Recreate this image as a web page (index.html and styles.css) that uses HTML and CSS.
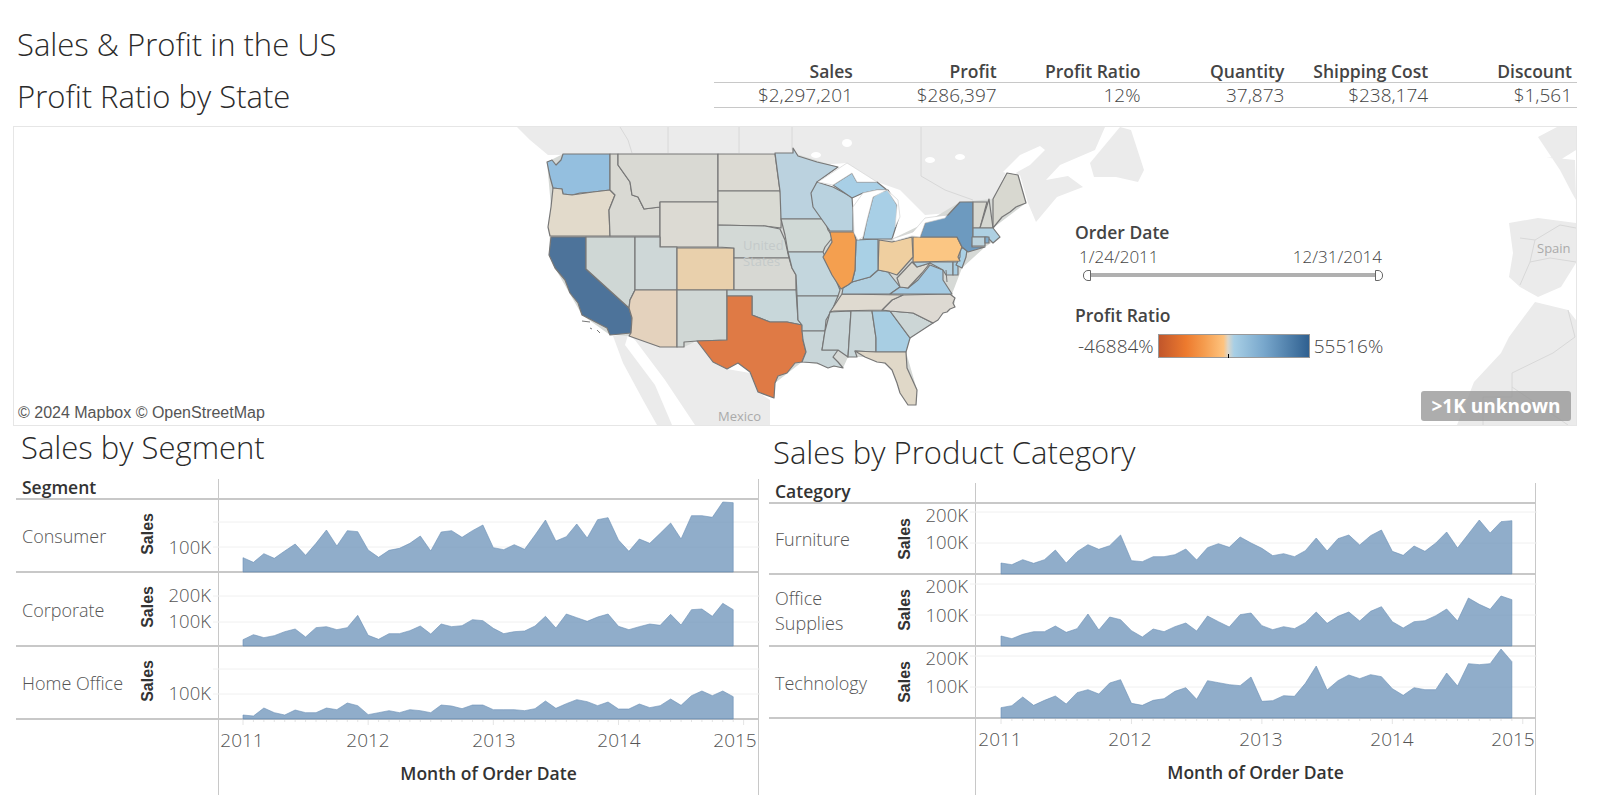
FILE: index.html
```html
<!DOCTYPE html>
<html lang="en">
<head>
    <meta charset="UTF-8">
    <title>Sales &amp; Profit in the US</title>
    <link rel="stylesheet" href="styles.css">
</head>
<body>
    <header class="top">
        <div class="titles">
            <h1>Sales &amp; Profit in the US</h1>
            <h2>Profit Ratio by State</h2>
        </div>
        <div class="kpi">
            <div class="kpi-head">Sales</div>
            <div class="kpi-head">Profit</div>
            <div class="kpi-head">Profit Ratio</div>
            <div class="kpi-head">Quantity</div>
            <div class="kpi-head">Shipping Cost</div>
            <div class="kpi-head">Discount</div>
            <div class="kpi-val">$2,297,201</div>
            <div class="kpi-val">$286,397</div>
            <div class="kpi-val">12%</div>
            <div class="kpi-val">37,873</div>
            <div class="kpi-val">$238,174</div>
            <div class="kpi-val">$1,561</div>
        </div>
    </header>

    <section class="map">
        <svg class="map-svg" viewBox="14 127 1562 298" width="1562" height="298">
            <g class="land">
                <polygon points="517,127 530,140 548,155 793,153 817,165 847,163 877,182 900,190 925,215 948,213 993,199 1007,170 1020,175 1028,203 1036,222 1057,197 1083,187 1068,176 1046,180 1060,165 1095,150 1105,127"/>
                <polygon points="1090,163 1120,127 1131,130 1144,170 1138,182 1116,177 1094,177"/>
                <polygon points="613,336 628,335 625,345 655,385 672,425 657,425 643,400 623,363"/>
                <polygon points="628,335 677,347 697,342 727,369 750,373 758,392 770,400 770,425 695,425 665,380 635,340"/>
                <polygon points="1538,137 1557,127 1576,127 1576,150 1560,160 1546,157 1575,160 1576,200 1572,193 1560,170"/>
                <polygon points="1509,223 1538,218 1576,223 1576,263 1561,287 1538,297 1520,287 1509,277 1513,253"/>
                <polygon points="1535,302 1568,310 1576,320 1576,425 1457,425 1474,382 1501,353 1509,337"/>
            </g>
            <g class="land-cut">
                <polygon points="1003,172 1020,155 1040,146 1045,150 1030,165 1012,175"/>
                <ellipse cx="847" cy="143" rx="5" ry="4"/>
                <ellipse cx="930" cy="160" rx="5" ry="3"/>
                <ellipse cx="960" cy="157" rx="5" ry="3"/>
                <ellipse cx="816" cy="155" rx="5" ry="3"/>
            </g>
            <g class="borders">
                <polyline points="668,127 668,153"/>
                <polyline points="739,127 739,153"/>
                <polyline points="792,127 792,150"/>
                <polyline points="620,127 628,140 632,153"/>
                <polyline points="921,127 921,176 945,190 973,200"/>
                <polyline points="1568,310 1575,337 1553,353 1512,373 1512,397 1483,397 1483,425"/>
                <polyline points="1512,387 1568,425"/>
                <polyline points="1520,238 1535,240 1530,262 1520,285"/>
                <polyline points="1535,240 1560,225 1576,228"/>
                <polyline points="1530,262 1550,258 1576,262"/>
            </g>
            <polygon class="us-base" points="547,162 563,154 775,154 793,153 838,167 817,182 853,207 858,240 892,239 925,223 960,202 993,199 1007,173 1018,175 1026,203 993,228 1000,237 985,247 962,268 952,294 955,303 933,323 910,338 906,352 917,390 916,405 908,405 893,367 865,357 848,357 843,368 802,362 775,383 774,398 758,392 750,372 738,363 727,369 697,341 684,347 660,347 629,336 610,335 582,315 555,268 549,255 551,207"/>
            <g class="states">
                <polygon fill="#94bfdf" points="547,162 552,160 556,165 561,160 563,154 610,154 610,190 593,192 580,193 572,195 563,194 562,189 553,188 550,177"/>
                <polygon fill="#e2dacb" points="553,188 562,189 563,194 572,195 593,192 610,190 615,195 609,210 610,236 550,236 548,227 551,207"/>
                <polygon fill="#4d739a" points="551,237 586,237 586,269 629,308 632,318 631,333 610,335 607,328 582,315 578,303 570,293 565,280 555,268 549,255"/>
                <polygon fill="#cfd7d5" points="586,237 635,237 635,290 630,300 629,308 586,269"/>
                <polygon fill="#d9d9d3" points="610,154 618,154 618,165 630,182 632,195 638,197 644,209 660,207 660,236 610,236 609,210 615,195 610,190"/>
                <polygon fill="#d9d9d3" points="618,154 718,154 718,202 660,202 660,207 644,209 638,197 632,195 630,182 618,165"/>
                <polygon fill="#dcdad3" points="660,202 718,202 718,247 660,247"/>
                <polygon fill="#ced7d7" points="635,237 660,237 660,247 677,247 677,290 635,290"/>
                <polygon fill="#e9d0ac" points="677,248 734,248 734,290 677,290"/>
                <polygon fill="#e4d2bd" points="635,290 677,290 677,347 660,347 629,336 631,333 632,318 629,308 630,300"/>
                <polygon fill="#d0d7d5" points="677,290 727,290 727,340 697,341 684,342 684,347 677,347"/>
                <polygon fill="#dcdad3" points="718,154 775,154 780,191 718,191"/>
                <polygon fill="#d9dad3" points="718,191 780,191 782,198 781,228 765,226 718,225"/>
                <polygon fill="#d3d9d6" points="718,225 765,226 780,229 785,240 789,258 734,258 734,248 718,247"/>
                <polygon fill="#d7d8d3" points="734,258 789,258 792,268 796,275 796,290 734,290"/>
                <polygon fill="#c8d7da" points="727,290 796,290 798,320 802,325 787,322 770,322 752,315 752,296 727,296"/>
                <polygon fill="#df7a45" points="727,296 752,296 752,315 770,322 787,322 802,325 803,340 806,352 802,362 795,363 787,373 778,376 775,383 774,398 758,392 750,372 738,363 727,369 713,362 697,341 727,340"/>
                <polygon fill="#bbd2df" points="775,153 793,153 793,148 798,156 817,162 838,167 817,182 812,195 815,208 825,219 781,219 780,191"/>
                <polygon fill="#d0d9d6" points="781,219 825,219 828,230 833,237 825,247 823,252 788,252 785,235"/>
                <polygon fill="#c3d6dd" points="788,252 823,252 833,273 840,290 838,296 797,296 796,275 792,268"/>
                <polygon fill="#c4d5da" points="797,296 838,296 833,308 826,320 825,331 802,331 802,325 798,320"/>
                <polygon fill="#c9d6d9" points="802,331 825,331 822,350 838,350 833,357 838,362 843,368 834,366 828,368 817,363 802,362 806,352 803,340"/>
                <polygon fill="#c9d6d9" points="851,311 830,312 825,331 822,350 838,350 848,357"/>
                <polygon fill="#c9d6d9" points="851,311 872,311 876,338 876,352 855,351 857,357 848,357"/>
                <polygon fill="#a8cee3" points="872,311 890,311 910,338 906,352 876,352 876,338"/>
                <polygon fill="#e0d8c8" points="855,351 876,352 906,352 907,368 917,390 916,405 908,405 900,393 897,383 892,370 885,363 877,362 865,357"/>
                <polygon fill="#ccd6d6" points="882,310 890,311 913,313 933,323 910,338 890,311"/>
                <polygon fill="#ddd9d2" points="903,295 950,294 955,298 953,303 955,307 950,309 947,312 943,313 938,320 933,323 913,313 890,311 882,310 892,300"/>
                <polygon fill="#dfdad0" points="842,294 903,295 892,300 882,310 834,311 830,312"/>
                <polygon fill="#b0cfe0" points="842,294 843,288 852,282 870,277 878,270 888,272 900,287 890,294"/>
                <polygon fill="#a5cbe3" points="890,294 900,287 908,288 918,280 930,265 943,270 943,280 952,294"/>
                <polygon fill="#dcd9d0" points="900,287 897,278 912,262 917,267 930,263 922,273 908,288"/>
                <polygon fill="#b5d1e0" points="913,262 953,262 953,275 946,275 943,270 930,263 917,267"/>
                <polygon fill="#a8cde2" points="953,262 958,262 958,275 953,275"/>
                <polygon fill="#aad0e5" points="960,247 967,250 966,257 962,268 956,265 960,257"/>
                <polygon fill="#fbc683" points="913,237 957,237 962,247 958,257 960,261 913,262"/>
                <polygon fill="#efcfa0" points="879,240 892,242 912,237 913,257 897,275 888,272 878,270"/>
                <polygon fill="#a9d0e5" points="856,240 878,239 878,270 870,277 852,282 855,270"/>
                <polygon fill="#f49f4f" points="830,232 854,232 856,240 855,270 852,282 848,285 841,289 832,275 823,257 832,242"/>
                <polygon fill="#b9d2df" points="817,182 833,187 852,197 853,212 853,231 830,231 813,207 811,193"/>
                <polygon fill="#a8cfe6" points="833,185 852,173 857,182 877,182 887,190 877,190 863,193 852,198"/>
                <polygon fill="#a8cfe6" points="873,197 880,192 888,190 897,205 898,220 892,239 863,239 867,220"/>
                <polygon fill="#6d9abf" points="920,237 925,223 948,215 960,202 973,202 973,238 972,247 985,247 968,252 962,247 957,237"/>
                <polygon fill="#d8d8d0" points="973,202 987,202 980,228 973,228"/>
                <polygon fill="#d5d7d1" points="989,199 993,228 980,228"/>
                <polygon fill="#d8d8d0" points="993,199 1007,173 1018,175 1026,203 1016,207 1010,212 1002,217 993,228"/>
                <polygon fill="#aed0e2" points="973,228 993,228 1000,237 993,243 987,237 973,237"/>
                <polygon fill="#bcd3dd" points="972,237 985,237 985,246 972,246"/>
                <polygon fill="#7fa9c9" points="985,237 989,237 989,243 985,243"/>
            </g>
            <g class="lakes">
                <polygon points="818,182 847,163 877,182 857,182 852,173 833,185"/>
                <polygon points="853,207 854,233 858,240 863,237 867,220 873,197 887,190 877,190 863,193"/>
                <polygon points="887,190 898,200 900,217 895,227 897,205"/>
                <polygon points="892,239 913,232 925,218 947,215 945,218 925,223 920,237 912,236 895,241"/>
            </g>
            <g class="isles">
                <polyline points="582,321 590,322"/>
                <polyline points="590,328 592,329"/>
                <polyline points="597,330 600,333"/>
                <polyline points="946,270 947,282"/>
            </g>
            <text class="map-label" x="743" y="250">United</text>
            <text class="map-label" x="743" y="266">States</text>
            <text class="map-label map-label-dark" x="718" y="421">Mexico</text>
            <text class="map-label map-label-dark" x="1537" y="253">Spain</text>
        </svg>
        <p class="attribution">© 2024 Mapbox © OpenStreetMap</p>
        <div class="unknown">&gt;1K unknown</div>
        <div class="legend">
            <div class="legend-title">Order Date</div>
            <div class="dates"><span>1/24/2011</span><span>12/31/2014</span></div>
            <div class="slider"><span class="handle handle-l"></span><span class="track"></span><span class="handle handle-r"></span></div>
            <div class="legend-title legend-title-2">Profit Ratio</div>
            <div class="ramp-row">
                <span>-46884%</span>
                <div class="ramp"><span class="ramp-tick"></span></div>
                <span>55516%</span>
            </div>
        </div>
    </section>

    <main class="bottom">
        <section class="panel panel-seg">
            <h3>Sales by Segment</h3>
            <div class="chart">
                <div class="col-head">Segment</div>
                <div class="plot-head"></div>

                <div class="row-head"><span class="row-label">Consumer</span><span class="sales">Sales</span></div>
                <div class="plot">
                    <svg viewBox="218 500 541 72" width="541" height="72">
                        <line class="grid" x1="212" x2="759" y1="522" y2="522"/>
                        <line class="grid" x1="212" x2="759" y1="547" y2="547"/>
                        <text class="tick" x="210" y="554">100K</text>
                        <polygon class="area" id="seg0"/>
                    </svg>
                </div>

                <div class="row-head"><span class="row-label">Corporate</span><span class="sales">Sales</span></div>
                <div class="plot">
                    <svg viewBox="218 573 541 73" width="541" height="73">
                        <line class="grid" x1="212" x2="759" y1="596" y2="596"/>
                        <line class="grid" x1="212" x2="759" y1="622" y2="622"/>
                        <text class="tick" x="210" y="602">200K</text>
                        <text class="tick" x="210" y="628">100K</text>
                        <polygon class="area" id="seg1"/>
                    </svg>
                </div>

                <div class="row-head"><span class="row-label">Home Office</span><span class="sales">Sales</span></div>
                <div class="plot">
                    <svg viewBox="218 647 541 72" width="541" height="72">
                        <line class="grid" x1="212" x2="759" y1="669" y2="669"/>
                        <line class="grid" x1="212" x2="759" y1="694" y2="694"/>
                        <text class="tick" x="210" y="700">100K</text>
                        <polygon class="area" id="seg2"/>
                    </svg>
                </div>

                <div class="axis-blank"></div>
                <div class="axis">
                    <svg viewBox="218 720 541 34" width="541" height="34">
                        <g class="ticks" id="segTicks"></g>
                        <text class="year" x="241" y="747">2011</text>
                        <text class="year" x="367" y="747">2012</text>
                        <text class="year" x="493" y="747">2013</text>
                        <text class="year" x="618" y="747">2014</text>
                        <text class="year" x="734" y="747">2015</text>
                    </svg>
                    <div class="axis-title">Month of Order Date</div>
                </div>
            </div>
        </section>

        <section class="panel panel-cat">
            <h3>Sales by Product Category</h3>
            <div class="chart">
                <div class="col-head">Category</div>
                <div class="plot-head"></div>

                <div class="row-head"><span class="row-label">Furniture</span><span class="sales">Sales</span></div>
                <div class="plot">
                    <svg viewBox="975 505 561 70" width="561" height="70">
                        <line class="grid" x1="969" x2="1536" y1="513" y2="513"/>
                        <line class="grid" x1="969" x2="1536" y1="544" y2="544"/>
                        <text class="tick" x="967" y="523">200K</text>
                        <text class="tick" x="967" y="550">100K</text>
                        <polygon class="area" id="cat0"/>
                    </svg>
                </div>

                <div class="row-head"><span class="row-label">Office<br>Supplies</span><span class="sales">Sales</span></div>
                <div class="plot">
                    <svg viewBox="975 576 561 71" width="561" height="71">
                        <line class="grid" x1="969" x2="1536" y1="585" y2="585"/>
                        <line class="grid" x1="969" x2="1536" y1="616" y2="616"/>
                        <text class="tick" x="967" y="594">200K</text>
                        <text class="tick" x="967" y="623">100K</text>
                        <polygon class="area" id="cat1"/>
                    </svg>
                </div>

                <div class="row-head"><span class="row-label">Technology</span><span class="sales">Sales</span></div>
                <div class="plot">
                    <svg viewBox="975 648 561 71" width="561" height="71">
                        <line class="grid" x1="969" x2="1536" y1="657" y2="657"/>
                        <line class="grid" x1="969" x2="1536" y1="688" y2="688"/>
                        <text class="tick" x="967" y="666">200K</text>
                        <text class="tick" x="967" y="694">100K</text>
                        <polygon class="area" id="cat2"/>
                    </svg>
                </div>

                <div class="axis-blank"></div>
                <div class="axis">
                    <svg viewBox="975 720 561 34" width="561" height="34">
                        <g class="ticks" id="catTicks"></g>
                        <text class="year" x="999" y="747">2011</text>
                        <text class="year" x="1129" y="747">2012</text>
                        <text class="year" x="1260" y="747">2013</text>
                        <text class="year" x="1391" y="747">2014</text>
                        <text class="year" x="1512" y="747">2015</text>
                    </svg>
                    <div class="axis-title">Month of Order Date</div>
                </div>
            </div>
        </section>
    </main>
    <script src="chart.js"></script>
</body>
</html>
```

FILE: styles.css
```css
*{
    box-sizing: border-box;
}

body{
    margin: 0;
    width: 1598px;
    height: 795px;
    overflow: hidden;
    background-color: white;
    font-family: 'Open Sans', Lato, sans-serif;
    color: #333;
}

h1, h2, h3{
    margin: 0;
    font-weight: 300;
    font-size: 31px;
    line-height: 34px;
    color: #2b2b2b;
}

.top{
    display: flex;
    height: 126px;
}

.titles{
    padding: 27px 0 0 17px;
}

h2{
    margin-top: 18px;
}

.kpi{
    display: grid;
    grid-template-columns: repeat(6, 1fr);
    grid-template-rows: 23px 25px;
    width: 863px;
    margin: 60px 21px 0 auto;
    height: 48px;
}

.kpi-head, .kpi-val{
    text-align: right;
    padding-right: 5px;
    border-bottom: 1px solid #c8c8c8;
}

.kpi-head{
    font-weight: 600;
    font-size: 17.5px;
    color: #444;
    line-height: 22px;
}

.kpi-val{
    font-weight: 300;
    font-size: 19px;
    color: #444;
    line-height: 24px;
}

.map{
    position: relative;
    width: 1564px;
    height: 300px;
    margin-left: 13px;
    border: 1px solid #e6e6e6;
}

.map-svg{
    display: block;
}

.land polygon{
    fill: #ebebeb;
}

.land-cut > *{
    fill: white;
}

.borders polyline{
    fill: none;
    stroke: #d8d8d8;
    stroke-width: 1;
}

.lakes polygon{
    fill: white;
    stroke: #ccc;
    stroke-width: 0.6;
}

.isles polyline{
    fill: none;
    stroke: #777;
    stroke-width: 1;
}

.us-base{
    fill: #d6d9d6;
}

.states polygon{
    stroke: #777;
    stroke-width: 1.2;
    stroke-linejoin: round;
}

.map-label{
    font-size: 13px;
    fill: #c4caca;
}

.map-label-dark{
    fill: #aaa;
}

.attribution{
    position: absolute;
    left: 4px;
    bottom: 3px;
    margin: 0;
    font-family: 'Liberation Sans', Arial, sans-serif;
    font-size: 16px;
    line-height: 18px;
    color: #555;
}

.unknown{
    position: absolute;
    left: 1407px;
    top: 264px;
    width: 150px;
    height: 30px;
    border-radius: 3px;
    background-color: rgba(150, 150, 150, 0.78);
    color: white;
    font-weight: 700;
    font-size: 19px;
    line-height: 30px;
    text-align: center;
}

.legend{
    position: absolute;
    left: 1061px;
    top: 94px;
    width: 340px;
}

.legend-title{
    font-weight: 600;
    font-size: 17.5px;
    line-height: 22px;
    color: #444;
}

.legend-title-2{
    margin-top: 23px;
}

.dates{
    display: flex;
    justify-content: space-between;
    margin: 4px 0 0 4px;
    width: 303px;
    font-weight: 300;
    font-size: 17px;
    line-height: 20px;
    color: #444;
}

.slider{
    display: flex;
    align-items: center;
    width: 300px;
    height: 12px;
    margin: 2px 0 0 8px;
}

.track{
    flex: 1;
    height: 4px;
    background-color: #b0b0b0;
}

.handle{
    width: 8px;
    height: 11px;
    background-color: white;
    border: 1px solid #666;
}

.handle-l{
    border-radius: 5px 0 0 5px;
}

.handle-r{
    border-radius: 0 5px 5px 0;
}

.ramp-row{
    display: flex;
    align-items: center;
    gap: 4px;
    margin: 8px 0 0 3px;
    height: 24px;
    font-weight: 300;
    font-size: 19px;
    color: #444;
}

.ramp{
    position: relative;
    width: 152px;
    height: 24px;
    border: 1px solid #999;
    background: linear-gradient(to right, #c1562b, #ed7a2e 18%, #f59c4e 30%, #fec37e 43%, #dcd6c9 46%, #a8cfe5 50%, #78a7cc 70%, #2f6090);
}

.ramp-tick{
    position: absolute;
    left: 69px;
    bottom: -1px;
    width: 1px;
    height: 4px;
    background-color: black;
}

.bottom{
    display: flex;
}

h3{
    padding-left: 5px;
}

.panel-seg{
    width: 744px;
    margin-left: 16px;
    padding-top: 4px;
}

.panel-cat{
    width: 767px;
    margin-left: 9px;
    padding-top: 9px;
}

.panel-cat h3{
    padding-left: 4px;
    margin-bottom: 14px;
}

.panel-seg h3{
    margin-bottom: 15px;
}

.chart{
    display: grid;
}

.panel-seg .chart{
    grid-template-columns: 202px 541px;
    grid-template-rows: 21px 73px 74px 73px 76px;
}

.panel-cat .chart{
    grid-template-columns: 206px 561px;
    grid-template-rows: 21px 71px 72px 72px 76px;
}

.col-head{
    padding-left: 6px;
    font-weight: 600;
    font-size: 17.5px;
    line-height: 17px;
    color: #333;
    border-bottom: 2px solid #c8c8c8;
}

.plot-head, .plot, .axis{
    border-left: 1px solid #c8c8c8;
    border-right: 1px solid #c8c8c8;
}

.plot-head{
    border-bottom: 2px solid #c8c8c8;
}

.row-head{
    display: grid;
    grid-template-columns: 116px 32px;
    align-items: center;
    border-bottom: 2px solid #c8c8c8;
}

.panel-seg .sales{
    margin-bottom: 4px;
}

.panel-cat .row-head{
    grid-template-columns: 120px 32px;
}

.row-label{
    padding: 2px 0 0 6px;
    font-weight: 300;
    font-size: 18px;
    line-height: 25px;
    color: #555;
    white-space: nowrap;
}

.sales{
    justify-self: center;
    writing-mode: vertical-rl;
    transform: rotate(180deg);
    font-family: 'Liberation Sans', Arial, sans-serif;
    font-weight: 700;
    font-size: 16px;
    color: #333;
}

.plot{
    border-bottom: 2px solid #c8c8c8;
}

.plot svg, .axis svg{
    display: block;
    overflow: visible;
}

.grid{
    stroke: #f0f0f0;
    stroke-width: 1;
}

.tick{
    font-weight: 300;
    font-size: 18.5px;
    fill: #555;
    text-anchor: end;
}

.area{
    fill: #7196bb;
    fill-opacity: 0.78;
    stroke: #6a8fb5;
    stroke-width: 0.6;
}

.ticks line{
    stroke: #e4e4e4;
    stroke-width: 1;
}

.year{
    font-weight: 300;
    font-size: 19px;
    fill: #555;
    text-anchor: middle;
}

.axis-title{
    margin-top: 7px;
    text-align: center;
    font-weight: 600;
    font-size: 17.5px;
    color: #333;
}
```

FILE: chart.js
```js
const seg = [
    [203,217,191,205,183,162,196,160,120,168,122,125,180,202,181,175,160,138,183,126,122,142,122,105,173,179,164,178,135,90,153,140,102,144,89,83,150,184,147,160,130,99,147,77,77,82,36,38],
    [449,434,443,437,425,417,441,413,410,419,413,376,436,448,431,431,422,408,432,402,410,407,389,392,415,431,425,423,408,379,414,372,383,394,381,372,409,419,410,402,406,373,405,359,357,379,340,359],
    [675,678,654,668,675,660,668,668,654,659,639,647,674,668,662,668,659,662,668,645,648,656,645,645,659,659,659,662,656,633,655,641,629,635,647,636,657,657,642,653,647,627,646,617,603,617,603,620]
]

const cat = [
    [222,227,212,223,212,183,222,188,167,181,170,138,215,218,203,203,197,180,213,176,164,175,144,162,178,200,194,203,185,147,186,149,138,168,140,123,187,199,171,187,162,129,177,135,93,132,98,95],
    [441,449,436,428,428,411,430,419,375,423,384,392,425,444,420,428,413,402,426,381,398,414,377,372,410,422,413,419,401,369,403,382,369,396,367,353,398,417,398,395,380,360,396,327,346,361,321,332],
    [656,650,624,649,634,621,645,611,602,615,582,572,643,649,634,629,607,596,631,575,581,587,590,564,637,635,620,622,583,531,603,575,558,569,557,563,599,619,596,602,602,552,591,524,527,524,480,518]
]

// values were read off in 3x pixels, so map them back to page pixels
function desenhar(id, valores, x0, passo, base){
    const pts = valores.map((v, i) => `${x0 + i * passo},${490 + v / 3}`)
    const xFim = x0 + (valores.length - 1) * passo
    pts.push(`${xFim},${base}`, `${x0},${base}`)
    document.getElementById(id).setAttribute('points', pts.join(' '))
}

function marcas(id, x0, passo, n){
    const g = document.getElementById(id)
    for (let i = 0; i < n; i++){
        const l = document.createElementNS('http://www.w3.org/2000/svg', 'line')
        const x = x0 + i * passo
        l.setAttribute('x1', x)
        l.setAttribute('x2', x)
        l.setAttribute('y1', 720)
        l.setAttribute('y2', i % 12 == 0 ? 725 : 722)
        g.appendChild(l)
    }
}

const baseSeg = [572, 646, 719]
const baseCat = [575, 647, 719]

seg.forEach((v, i) => desenhar('seg' + i, v, 242, 10.43, baseSeg[i]))
cat.forEach((v, i) => desenhar('cat' + i, v, 1000, 10.87, baseCat[i]))

marcas('segTicks', 242, 10.43, 49)
marcas('catTicks', 1000, 10.87, 49)
```
